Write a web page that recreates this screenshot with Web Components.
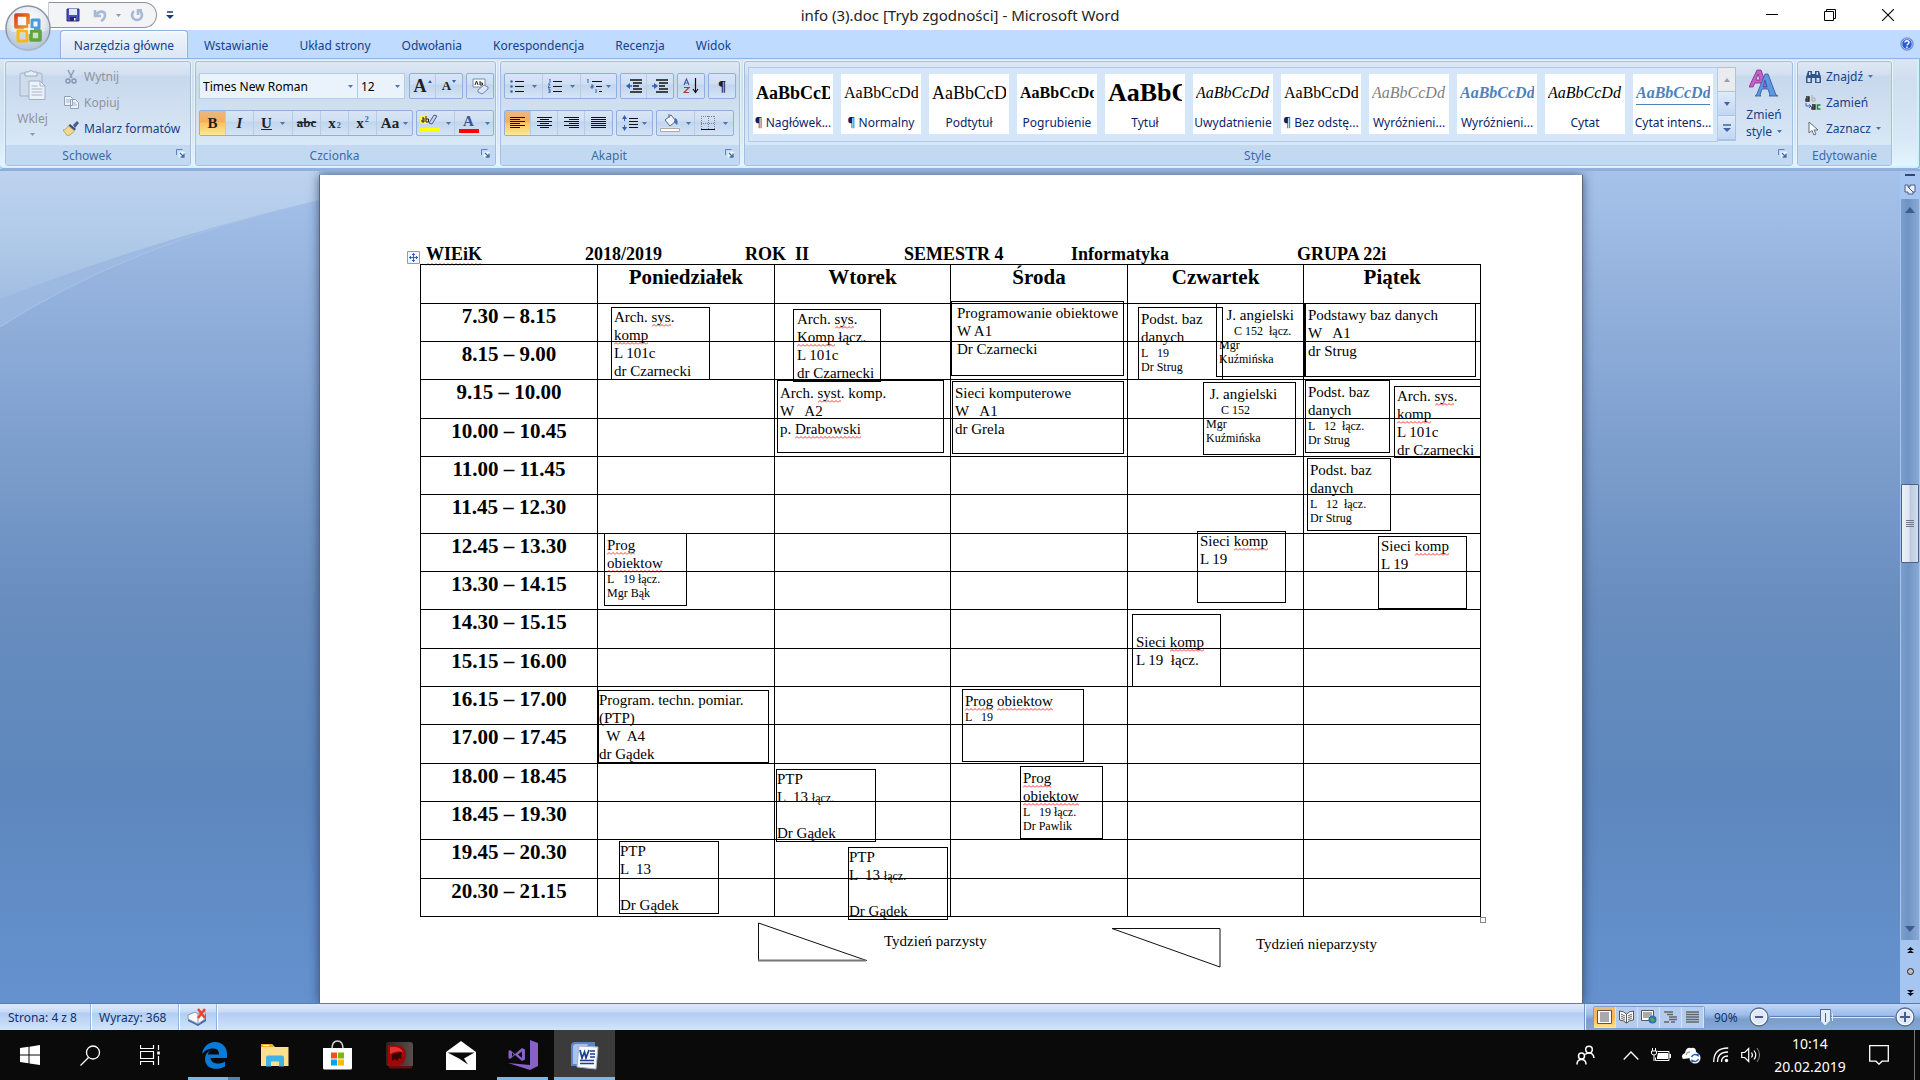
<!DOCTYPE html>
<html lang="pl">
<head>
<meta charset="utf-8">
<title>info (3).doc [Tryb zgodności] - Microsoft Word</title>
<style>
html,body{margin:0;height:100%}
body{font-family:"Noto Sans","Open Sans",sans-serif;font-size:12px;color:#15428b;overflow:hidden}
</style>
</head>
<body>
<word-app></word-app>
<script>
const ICONS = {
  office: [46,46,`<defs><radialGradient id="g" cx=".5" cy=".35" r=".65"><stop offset="0" stop-color="#fff"/><stop offset=".6" stop-color="#e6ebf2"/><stop offset="1" stop-color="#a9b9cf"/></radialGradient><linearGradient id="o1" x2="1" y2="1"><stop offset="0" stop-color="#d8401a"/><stop offset="1" stop-color="#f59a22"/></linearGradient></defs><circle cx="23" cy="23" r="22" fill="url(#g)" stroke="#8b95a5" stroke-width="1.5"/><path d="M2 25a21 21 0 0 0 42 0c-9 4-33 4-42 0z" fill="#bccbe0" opacity=".6"/><g fill="none" stroke-width="3.6" stroke-linejoin="round"><path d="M11 10h12v12h-12z" stroke="url(#o1)"/><path d="M27 15h7v8h-7z" stroke="#4a9be0" stroke-width="3"/><path d="M13 26h9v10h-9z" stroke="#f5b81c" stroke-width="3"/><path d="M26 26h9v9h-9z" stroke="#5da738"/></g><path d="M19 24h10M24 19v10" stroke="#fff" stroke-width="1.500"/>`],
  save: [14,14,`<path d="M1 1h12v12h-12z" fill="#4a4fc0" stroke="#2b2f86"/><path d="M3 1h8v6h-8z" fill="#dfe8fb"/><path d="M4 9h6v4h-6z" fill="#25295c"/><path d="M8 10h1.500v2.500h-1.500z" fill="#fff"/>`],
  undo: [14,13,`<path d="M2 1v6h6M3 6c3-5 9-4 9 0 0 3-2 5-4 6" fill="none" stroke="#a9b9d4" stroke-width="2.600"/>`],
  redo: [14,13,`<path d="M4 2a5 5 0 1 0 6 0M12 1h-4v5" fill="none" stroke="#a9b9d4" stroke-width="2.600"/>`],
  more: [8,9,`<path d="M1 1h6" stroke="#1f3a6e" stroke-width="1.500"/><path d="M0 4h8l-4 4z" fill="#1f3a6e"/>`],
  min: [12,12,`<path d="M0 5.500h12" stroke="#000"/>`],
  restore: [12,12,`<path d="M.5 2.500h9v9h-9zM2.500 2.500v-2h9v9h-2" fill="none" stroke="#000"/>`],
  close: [12,12,`<path d="M0 0l12 12M12 0l-12 12" stroke="#000" stroke-width="1.100"/>`],
  help: [14,14,`<circle cx="7" cy="7" r="6.300" fill="#2a5bd0" stroke="#8aa6d8"/><circle cx="7" cy="7" r="5.200" fill="none" stroke="#cfe0ff" stroke-width=".8"/><path d="M5 5.500c0-2.500 4-2.500 4 0 0 1.500-2 1.500-2 3M7 9.500v1.500" fill="none" stroke="#fff" stroke-width="1.500"/>`],
  arrow: [5,3,`<path d="M0 0h5l-2.500 3z" fill="#4d76ad"/>`],
  grow: [4,3,`<path d="M0 3h4l-2-3z" fill="#2f5fb5"/>`],
  shrink: [4,3,`<path d="M0 0h4l-2 3z" fill="#2f5fb5"/>`],
  arrowgray: [5,3,`<path d="M0 0h5l-2.500 3z" fill="#8f99a8"/>`],
  paste: [27,31,`<path d="M1 5q0-2 2-2h18q2 0 2 2v21h-22z" fill="#cfdcec" stroke="#a2b3c9"/><path d="M6 2h3q3-3 6 0h3v4h-12z" fill="#e8eef6" stroke="#9aabc2"/><path d="M10 11h11l5 5v13.500h-16z" fill="#eef3f9" stroke="#9fb0c6"/><path d="M21 11v5h5M12.500 16h6M12.500 19h11M12.500 22h11M12.500 25h11" fill="none" stroke="#a8b7cb"/>`],
  cut: [12,15,`<path d="M3 1l4 8M9 1l-4 8" stroke="#8fa1bb" stroke-width="1.600"/><circle cx="3" cy="12" r="2" fill="none" stroke="#8495b0" stroke-width="1.500"/><circle cx="9" cy="12" r="2" fill="none" stroke="#8495b0" stroke-width="1.500"/>`],
  copy: [15,13,`<path d="M.5.500h6l2 2v7h-8zM6.500 3.500h5l3 3v6h-8z" fill="#eef3fa" stroke="#8fa1bb"/><path d="M2 4h4M2 6h4M8 7h4M8 9h5" stroke="#a5b5ca"/>`],
  brush: [16,15,`<path d="M10 4l4-4 2 2-4 5z" fill="#4b5d8c"/><path d="M7 3l6 5-1.500 1.500-6-5z" fill="#3a4a74"/><path d="M5.500 5l6 5c-2 2-4 4-7 5l-4.500-6c2 0 4-2 5.500-4z" fill="#f3d890" stroke="#a88a45" stroke-width=".7"/>`],
  launch: [9,9,`<path d="M.5 6v-5.500h6" fill="none" stroke="#5d85b8"/><path d="M3 3h5.500v5.500h-5.500z" fill="#fff" stroke="#dfeefe"/><path d="M4 4l4 4M8 4.500v3.500h-3.500" stroke="#3d6aa3" stroke-width="1.300" fill="none"/>`],
  eraser: [17,17,`<path d="M1 1h12v8h-12z" fill="#fff" stroke="#7a8aa5"/><path d="M3 7l1.500-4 1.500 4M8 3v4M8 5h2.500v2h-2.500" stroke="#222" fill="none"/><path d="M6 12l6-5 4 2v2l-6 5-4-2z" fill="#dde6f5" stroke="#7487ad"/>`],
  bullets: [14,13,`<path d="M5 1.500h9M5 6.500h9M5 11.500h9" stroke="#111"/><g fill="#3a62b5"><circle cx="1.500" cy="1.500" r="1.300"/><circle cx="1.500" cy="6.500" r="1.300"/><circle cx="1.500" cy="11.500" r="1.300"/></g>`],
  numbers: [14,14,`<path d="M5 2.500h9M5 7.500h9M5 12.500h9" stroke="#111"/><path d="M1 0h1v4M0 5h2l-2 3.500h2.500M0 10h2v4h-2M.5 12h1.500" stroke="#3a62b5" fill="none"/>`],
  multi: [16,15,`<path d="M6 2.500h10M10 7.500h6M13 12.500h3" stroke="#111"/><path d="M1 0h1v4M5 6h2v3h-2v-1.500h2M10 10v4" stroke="#3a62b5" fill="none"/>`],
  outdent: [16,15,`<path d="M4 1h12M7 4h9M7 7h6M7 10h9M4 13h12" stroke="#111" stroke-width="1.400"/><path d="M0 7l4-3v6z" fill="#2f5fc0"/><path d="M3 7h3" stroke="#2f5fc0" stroke-width="1.500"/>`],
  indent: [16,15,`<path d="M4 1h12M7 4h9M7 7h6M7 10h9M4 13h12" stroke="#111" stroke-width="1.400"/><path d="M6 7l-4-3v6z" fill="#2f5fc0"/><path d="M0 7h3" stroke="#2f5fc0" stroke-width="1.500"/>`],
  sort: [16,16,`<path d="M1 7l2.500-6 2.500 6M2 5h3" stroke="#3c62a8" fill="none" stroke-width="1.200"/><path d="M1 9.500h5l-5 5h5" stroke="#a63a3a" fill="none" stroke-width="1.200"/><path d="M12.500 0v14M10 11l2.500 3.500 2.500-3.500" stroke="#111" fill="none" stroke-width="1.200"/>`],
  aleft: [15,12,`<path d="M0 .5h15M0 2.500h10M0 4.500h15M0 6.500h10M0 8.500h15M0 10.500h10" stroke="#111"/>`],
  acenter: [15,12,`<path d="M0 .5h15M3 2.500h9M0 4.500h15M3 6.500h9M0 8.500h15M3 10.500h9" stroke="#111"/>`],
  aright: [15,12,`<path d="M0 .5h15M5 2.500h10M0 4.500h15M5 6.500h10M0 8.500h15M5 10.500h10" stroke="#111"/>`],
  ajust: [15,12,`<path d="M0 .5h15M0 2.500h15M0 4.500h15M0 6.500h15M0 8.500h15M0 10.500h15" stroke="#111"/>`],
  spacing: [16,16,`<path d="M7 3.500h9M7 6.500h9M7 9.500h9M7 12.500h9" stroke="#111"/><path d="M0 4l2.500-4 2.500 4zM0 12l2.500 4 2.500-4z" fill="#2f5fc0"/><path d="M2.500 3v3M2.500 10v3" stroke="#2f5fc0"/>`],
  bucket: [20,18,`<path d="M5 6l6-5 5 6-6 5z" fill="#f1f5fb" stroke="#55678a"/><path d="M9 4v-4" stroke="#55678a"/><path d="M15 4c3 1 3 5 2 7l-3-3z" fill="#3d70ba"/><path d="M0 13h20v1.500h-20z" fill="#ff0"/><path d="M.5 14.500h19v3h-19z" fill="#fff" stroke="#aaa"/>`],
  border: [14,15,`<path d="M.5 0v13M7.500 0v13M13.500 0v13M0 .5h14M0 7.500h14" stroke="#7a8499" stroke-dasharray="1 1"/><path d="M0 13.500h14" stroke="#111"/>`],
  marker: [20,18,`<path d="M0 1h8v9h-8z" fill="#ffef5a"/><path d="M2 4h2v4h-2v-2h2M6 2v6h2.500v-3h-2.500" fill="none" stroke="#222"/><path d="M9 9l5-8 3 1-5 8z" fill="#c5d4ec" stroke="#4a5f8d"/><path d="M0 14h20v4h-20z" fill="#ff0"/>`],
  change: [30,28,`<path d="M0 18L8 1h4l6 17h-5l-1-4h-6l-2 4zM7 11h4l-2-6z" fill="#c55fc5" stroke="#7e2f8c" stroke-width=".8"/><path d="M6 27l1.500-1 8.500-21h3l8 21 2 1h-9l1-1-2-6h-6l-2 6 1 1zM14 18h4l-2-7z" fill="#5f97e0" stroke="#2c56a4" stroke-width=".8"/>`],
  find: [15,13,`<path d="M2 1h4v3h3v-3h4l2 6v6h-6v-5h-3v5h-6v-6z" fill="#32558c"/><path d="M1.500 8h3v4h-3zM10.500 8h3v4h-3zM3 2h1.500v3h-1.500zM10.500 2h1.500v3h-1.500z" fill="#cfe0f5"/>`],
  replace: [16,15,`<path d="M1 2h3v4h-3v-2h3" fill="none" stroke="#222" stroke-width="1.300"/><path d="M7 0v6h3v-3h-3" fill="none" stroke="#aaa"/><path d="M1 8v3h4M4 9.500l2 1.500-2 2" fill="none" stroke="#3b63a8"/><path d="M7 10h3v4h-3v-2h3" fill="none" stroke="#222" stroke-width="1.300"/><path d="M15.500 10h-3v4h3" fill="none" stroke="#1b8a2b" stroke-width="1.600"/>`],
  cursor: [10,15,`<path d="M1 1v11l3-2.500 2 4.500 2-1-2-4h4z" fill="#fff" stroke="#5b6a82"/>`],
  up: [6,4,`<path d="M0 4h6l-3-4z" fill="#9a9fa8"/>`],
  down: [6,4,`<path d="M0 0h6l-3 4z" fill="#3e66a4"/>`],
  expand: [8,8,`<path d="M0 1h8" stroke="#3e66a4" stroke-width="1.500"/><path d="M0 4h8l-4 4z" fill="#3e66a4"/>`],
  move: [13,13,`<path d="M.5.500h12v12h-12z" fill="#f3f5f9" stroke="#9a9a9a"/><path d="M6.500 2v9M2 6.500h9M5 3.500h3M5 9.500h3M3.500 5v3M9.500 5v3" stroke="#2f5fc0"/>`],
  tri1: [110,40,`<path d="M.5 1v37.500h108z" fill="none" stroke="#111"/><path d="M0 38.500h108" stroke="#777" stroke-width="2"/>`],
  tri2: [110,40,`<path d="M1 .5h108v38.500z" fill="none" stroke="#111"/>`],
  swoosh: [319,160,`<defs><linearGradient id="s" x2="0" y2="1"><stop offset="0" stop-color="#bdd3f0"/><stop offset=".5" stop-color="#b1cbe9"/><stop offset="1" stop-color="#a3bde2"/></linearGradient></defs><path d="M0 0h319v29Q130 72 0 156z" fill="#9fbbe2" opacity=".75"/><path d="M319 29Q130 72 0 156" fill="none" stroke="#a9c3e8"/><path d="M0 0h319v29Q160 66 0 128z" fill="url(#s)"/>`],
  ruler: [12,12,`<path d="M1 2h3v2h2v-2h5v7h-2v2h-5v-2h-3z" fill="#e8eefb" stroke="#4c5d80"/><path d="M4 4l5 5" stroke="#4c5d80"/>`],
  sup: [10,6,`<path d="M0 6h10l-5-6z" fill="#3f5c8f"/>`],
  sdown: [10,6,`<path d="M0 0h10l-5 6z" fill="#3f5c8f"/>`],
  pgup: [7,7,`<path d="M0 3h7l-3.500-3zM0 6h7l-3.500-3z" fill="#111"/>`],
  pgdn: [7,7,`<path d="M0 1h7l-3.500 3zM0 4h7l-3.500 3z" fill="#111"/>`],
  ball: [7,7,`<circle cx="3.500" cy="3.500" r="3" fill="#c4bfb8" stroke="#222"/>`],
  spell: [21,19,`<path d="M1 9l7-3 4 2 7-2v7l-8 5-10-5z" fill="#3f66b2"/><path d="M1 7l7-3 3 2 7-3v8l-7 5-10-5z" fill="#f7f9fd" stroke="#8a97b0"/><path d="M11 6v9" stroke="#8a97b0"/><path d="M11 1l7 9M18 1l-7 9" stroke="#e8442c" stroke-width="2.500"/>`],
  v1: [15,14,`<path d="M.5.500h14v13h-14z" fill="#fff" stroke="#555"/><path d="M3 3h9M3 5h9M3 7h9M3 9h9M3 11h9" stroke="#555"/>`],
  v2: [15,14,`<path d="M.5 1q4 0 7 3 3-3 7-3v9q-4 0-7 3-3-3-7-3zM7.500 4v9" fill="#fff" stroke="#555"/><path d="M2 4l4 2M2 6l4 2M2 8l4 2M13 4l-4 2M13 6l-4 2M13 8l-4 2" stroke="#666"/>`],
  v3: [16,14,`<path d="M.5.500h12v10h-12z" fill="#fff" stroke="#555"/><path d="M2 3h9M2 5h9M2 7h6" stroke="#555"/><circle cx="11.500" cy="9.500" r="4" fill="#2d6db5"/><path d="M9 9q2-3 4 0t-2 3z" fill="#5aa84a"/>`],
  v4: [13,13,`<path d="M0 1h9M3 3.500h6M5 6h8M5 8.500h8M0 11h5M7 11h4" stroke="#666" stroke-width="1.300"/>`],
  v5: [13,12,`<path d="M0 1h13M0 3.500h13M0 6h13M0 8.500h13M0 11h13" stroke="#666" stroke-width="1.500"/>`],
  zminus: [20,20,`<circle cx="10" cy="10" r="9" fill="#dfe8f4" stroke="#526c99" stroke-width="1.300"/><circle cx="10" cy="10" r="7.600" fill="none" stroke="#fff"/><path d="M6 10h8" stroke="#475f8a" stroke-width="2"/>`],
  zplus: [20,20,`<circle cx="10" cy="10" r="9" fill="#dfe8f4" stroke="#526c99" stroke-width="1.300"/><circle cx="10" cy="10" r="7.600" fill="none" stroke="#fff"/><path d="M5 10h10M10 5v10" stroke="#475f8a" stroke-width="2"/>`],
  win: [20,20,`<path d="M0 3l8.500-1.200v7.700h-8.500zM9.500 1.700l10.500-1.700v9.500h-10.500zM0 10.500h8.500v7.700l-8.500-1.200zM9.500 10.500h10.500v9.500l-10.500-1.500z" fill="#fff"/>`],
  search: [21,21,`<circle cx="13" cy="7.500" r="6.500" fill="none" stroke="#fff" stroke-width="1.300"/><path d="M8.500 12.500l-8 8" stroke="#fff" stroke-width="1.300"/>`],
  tasks: [20,20,`<path d="M.5 0v3.500h13v-3.500M.5 20v-3.500h13v3.500M.5 6.500h13v7h-13zM18.500 0v5M18.500 11v9" fill="none" stroke="#fff" stroke-width="1.200"/><path d="M17.200 6.500h2.600v3h-2.600z" fill="#fff"/>`],
  edge: [26,27,`<path d="M1 12C2 5 7 0 14 0c8 0 12 6 12 12v4h-16.500c.5 6 9 7 14.500 3.500v5C16 29 4 27 4 17c0-4 2-7 5-8.500-1 1-2 2.500-2 4h11c0-4-2-6-6-6-5 0-9 2.500-11 5.500z" fill="#0a7ad8"/>`],
  folder: [28,24,`<path d="M0 1h11l3 3h13.500v19h-27.500z" fill="#fde08d"/><path d="M0 1h11l2 3h-13z" fill="#e8b12c"/><path d="M2 2h6v1h-6z" fill="#fff"/><path d="M5 23.500v-9q0-2 2-2h14q2 0 2 2v9h-5v-5h-8v5z" fill="#3fb2e8"/>`],
  store: [29,30,`<path d="M9 9q0-8 5.500-8t5.500 8" fill="none" stroke="#cfcfcf" stroke-width="1.600"/><path d="M0 8h29v20q0 1.500-1.500 1.500h-26q-1.500 0-1.500-1.500z" fill="#fff"/><path d="M8 12.500h6v6h-6z" fill="#f25022"/><path d="M15 12.500h6v6h-6z" fill="#7fba00"/><path d="M8 19.500h6v6h-6z" fill="#00a4ef"/><path d="M15 19.500h6v6h-6z" fill="#ffb900"/>`],
  dred: [27,27,`<defs><linearGradient id="dk" x1="0" x2="1"><stop offset="0" stop-color="#2b2422"/><stop offset="1" stop-color="#55504e"/></linearGradient></defs><path d="M0 2q0-2 2-2h22q3 0 3 3v21h-25q-2 0-2-2z" fill="url(#dk)"/><path d="M2 3h8q10 0 10 10t-10 11h-8z" fill="#a00808"/><path d="M4 5h6q6 1 7 6-4-4-13 1z" fill="#e23434"/><path d="M6 12l10-2-1 4 1 3-3-1-2 3-2-2-3 2z" fill="#3c0303"/><path d="M2 24h24v2.500h-22z" fill="#6a0c0c"/>`],
  mail: [30,29,`<path d="M0 11l15-11 15 11v18h-30z" fill="#fff"/><path d="M1.500 11.500h27l-10.500 6 4 6-9-6z" fill="#0a0a0a"/>`],
  vs: [30,30,`<path d="M22 0l8 3v23l-8 4-22-7 22 2z" fill="#8861c5"/><path d="M2 10l5 4 7-6 3 1.500v10l-3 1.500-7-6-5 4-1.500-1v-7zM4 12.500v4l2-2zM14 11.500l-4 3 4 3.500z" fill="#8861c5" fill-rule="evenodd"/>`],
  word: [29,29,`<path d="M1 5q0-4 4-4h20v24h-24z" fill="#5f86c4"/><path d="M3 6q0-3 3-3h12l-8 20h-7z" fill="#a9c3ea"/><path d="M9 5l19 1-2 22-19-2z" fill="#f6f9ff" stroke="#9db4d8"/><path d="M10 9l2 8 2.500-6 1.500 6 3-8" fill="none" stroke="#1d3f8c" stroke-width="1.700"/><path d="M20 10h5M20 13h5M20 16h5M10 19.500h14M10 22.500h14" stroke="#1d3f8c" stroke-width="1.400"/>`],
  people: [20,20,`<g fill="none" stroke="#fff" stroke-width="1.500"><circle cx="13" cy="4.500" r="3.300"/><circle cx="5.500" cy="11" r="3"/><path d="M1 19.500q0-5 4.500-5t4.500 5M9 9.500q2-1.500 4-1.500 4.500 0 5 5"/></g>`],
  chev: [16,9,`<path d="M.7 8.500l7.300-7.500 7.300 7.500" fill="none" stroke="#fff" stroke-width="1.300"/>`],
  battery: [20,14,`<path d="M6.500 3.500h11.500v9h-13.500v-3" fill="none" stroke="#fff"/><path d="M7 5h10v6h-11v-2z" fill="#fff"/><path d="M18.500 6h1.500v4h-1.500z" fill="#fff"/><path d="M1.500 0v3M4.500 0v3M.5 3h5v2q0 2-2.500 2t-2.500-2zM3 7v6" fill="none" stroke="#fff"/>`],
  cloud: [20,17,`<path d="M2 12q-3-4 2-6 1-6 6-5 5-1 5 4 3 1 3 5z" fill="#fff"/><path d="M5 8q1-4 4-3" fill="none" stroke="#777"/><circle cx="14" cy="11" r="5.500" fill="#fff"/><path d="M10.500 10q2-4 6.500-1.500v-2M17.500 12q-2 4-6.500 1.500v2" fill="none" stroke="#1c5fc0" stroke-width="1.500"/>`],
  wifi: [16,16,`<g fill="none" stroke="#fff" stroke-width="1.300"><path d="M.7 15q0-14 14.500-14"/><path d="M4.500 15q0-10 10.500-10"/><path d="M8.500 15q0-6 6.500-6"/></g><circle cx="13.500" cy="13.500" r="1.700" fill="#fff"/>`],
  vol: [20,16,`<path d="M.7 5.500h3l4-4v13l-4-4h-3z" fill="none" stroke="#fff" stroke-width="1.200"/><path d="M10.500 5.500q1.800 2.500 0 5M13 3.500q3.500 4.500 0 9" fill="none" stroke="#fff" stroke-width="1.200"/><path d="M16 1q5 7 0 14" fill="none" stroke="#888"/>`],
  notif: [20,20,`<path d="M.7.700h18.600v15.500h-6.300l-3 3-3-3h-6.300z" fill="none" stroke="#fff" stroke-width="1.300"/>`]
};

const define = (tag, css, html, after) => {
  const tpl = document.createElement('template');
  tpl.innerHTML = `<style>*{box-sizing:border-box}button{font:inherit;color:inherit;background:none;border:0;padding:0;margin:0}${css}</style>${html}`;
  customElements.define(tag, class extends HTMLElement {
    constructor() { super(); this.attachShadow({ mode: 'open' }).append(tpl.content.cloneNode(true)); }
    connectedCallback() { if (after) after(this, this.shadowRoot); }
  });
};

define('ui-icon', `:host{display:inline-flex;flex:none}svg{display:block}`, ``, (el, root) => {
  const [w, h, body] = ICONS[el.getAttribute('name')];
  const box = document.createElement('div');
  box.innerHTML = `<svg width="${w}" height="${h}" viewBox="0 0 ${w} ${h}" aria-hidden="true">${body}</svg>`;
  root.append(box.firstChild);
});

define('title-bar', `
:host{display:grid;grid-template-columns:1fr auto 1fr;align-items:center;height:30px;background:#fff;color:#222;position:relative}
.qat{align-self:start;display:flex;align-items:center;margin:2px 0 0 48px}
.pill{display:flex;align-items:center;height:26px;width:109px;padding:0 12px 0 17px;gap:9px;background:#f3f4f6;border:1px solid #8d929b;border-radius:0 13px 13px 0;border-left-color:#c9ccd2}
.pill button{display:flex}.pill .u{margin-left:4px}
.more{display:flex;margin-left:9px}
h1{font-size:15px;line-height:30px;font-weight:400;margin:0}
.win{display:flex;justify-content:flex-end;gap:46px;padding-right:26px;align-items:center}
.win button{display:flex}
.office{position:absolute;left:5px;top:5px;z-index:2}`,
`<div class="qat"><div class="pill"><button aria-label="Zapisz"><ui-icon name="save"></ui-icon></button><button class="u" aria-label="Cofnij"><ui-icon name="undo"></ui-icon></button><ui-icon name="arrowgray"></ui-icon><button aria-label="Powtórz"><ui-icon name="redo"></ui-icon></button></div><button class="more" aria-label="Dostosuj"><ui-icon name="more"></ui-icon></button></div>
<h1>info (3).doc [Tryb zgodności] - Microsoft Word</h1>
<div class="win"><button aria-label="Minimalizuj"><ui-icon name="min"></ui-icon></button><button aria-label="Przywróć"><ui-icon name="restore"></ui-icon></button><button aria-label="Zamknij"><ui-icon name="close"></ui-icon></button></div>
<button class="office" aria-label="Przycisk pakietu Office"><ui-icon name="office"></ui-icon></button>`);

define('ribbon-tabs', `
:host{display:flex;align-items:flex-end;gap:1px;height:29px;background:#bfdbff;padding:0 6px 0 60px;border-bottom:1px solid #8db2e3}
button{height:28px;padding:2px 15px 0;color:#15428b}
.on{height:28px;width:128px;padding:2px 0 0;background:linear-gradient(#eef5fd,#dbe6f4);border:1px solid #8db2e3;border-bottom:0;border-radius:4px 4px 0 0;box-shadow:inset 0 1px 2px #fff}
.help{margin-left:auto;padding:0;display:flex;align-items:center}`,
`<button class="on">Narzędzia główne</button><button>Wstawianie</button><button>Układ strony</button><button>Odwołania</button><button>Korespondencja</button><button>Recenzja</button><button>Widok</button><button class="help" aria-label="Pomoc"><ui-icon name="help"></ui-icon></button>`);

define('ribbon-group', `
:host{display:flex;flex-direction:column;border:1px solid #a3bfdf;border-radius:3px;box-shadow:0 0 0 1px #e9f3fd;background:linear-gradient(#dee8f5 0,#d3dff0 13px,#c8d8ed 14px,#d9e8f6 84px);height:105px;overflow:hidden}
.body{flex:1;min-height:0}
footer{position:relative;height:20px;line-height:22px;background:#c2d9f1;color:#3e6aaa;display:flex;justify-content:center}
:host([launch]) footer{padding-right:22px}
footer button{position:absolute;right:5px;top:4px;display:flex}`,
`<div class="body"><slot></slot></div><footer><span></span></footer>`, (el, root) => {
  root.querySelector('span').textContent = el.getAttribute('label');
  if (el.hasAttribute('launch') && !root.querySelector('button'))
    root.querySelector('footer').insertAdjacentHTML('beforeend', '<button aria-label="Więcej opcji"><ui-icon name="launch"></ui-icon></button>');
});

define('style-item', `
:host{display:flex;flex-direction:column;width:80px;height:60px;background:#fff;overflow:hidden;flex:none}
.s{height:38px;margin:0 3px;overflow:hidden;display:flex;align-items:center;white-space:nowrap;color:#000;font:16px/38px "Liberation Serif",serif}
.n{color:#0b1f6b;text-align:center;line-height:22px;white-space:nowrap}`,
`<div class="s"><slot></slot></div><div class="n"></div>`, (el, root) => {
  root.querySelector('.n').textContent = el.getAttribute('label');
  root.querySelector('.s').style.cssText = el.dataset.font || '';
});

define('word-ribbon', `
:host{display:flex;gap:4px;height:110px;padding:2px 27px 5px 5px;background:linear-gradient(#dbe6f4,#cfdef0 20px,#d9e8f6 80px,#e3f6ff);border:1px solid #8db2e3;border-top:0;border-width:0 1px 1px 0;border-radius:0 0 4px 4px;box-shadow:inset 0 -2px 1px #cdf3ff,inset -2px 0 1px #cdf3ff}
.row{display:flex}
.clip{width:186px}.font{width:301px}.para{width:240px}.sty{flex:1;min-width:0}.edit{width:95px}
.cliprow{display:flex;height:84px}
.paste{width:53px;display:flex;flex-direction:column;align-items:center;padding-top:8px;color:#8e949d}
.paste span{line-height:20px;margin:8px 0 0}.paste ui-icon+span+ui-icon{margin-top:4px}
.list{display:flex;flex-direction:column;padding-top:1px}
.cliprow .list{margin-left:4px}.edit .list{padding-left:7px}
.list button{display:flex;align-items:center;height:26px;gap:5px;white-space:nowrap;color:#15428b}
.list .dis{color:#8e949d}
.list .ic{width:16px;display:flex;justify-content:center}
.tools{display:flex;flex-direction:column;gap:11px;padding:11px 3px 0;height:84px}
.tools .row{gap:3px}
.set{display:flex;height:26px;border:1px solid #8fb0dc;border-radius:2px;background:linear-gradient(#d8e5f5 0,#cfdff2 10px,#c1d5ed 11px,#d4e4f5)}
.set button{flex:none;display:flex;align-items:center;justify-content:center;gap:8px;border-right:1px solid #b5cbe8;color:#222;font-family:"Liberation Serif",serif;font-weight:700;font-size:15px}
.set .big{font-size:18px}.set .small{font-size:13px}
.set button:last-child{border:0}
.w26{width:26px}.w27{width:27px}.w28{width:28px}.w35{width:35px}.w38{width:38px}.w39{width:39px}
.set .g4{gap:4px}.set .g6{gap:6px}
.set .on{background:linear-gradient(#e8b884,#f8ad57 45%,#fcc25f 50%,#fde79b)}
.combo{display:flex;height:26px}
select{appearance:none;height:26px;border:1px solid #b3cbe9;background:#eaf2fb url("data:image/svg+xml,%3Csvg xmlns='http://www.w3.org/2000/svg' width='5' height='3'%3E%3Cpath d='M0 0h5l-2.5 3z' fill='%234d76ad'/%3E%3C/svg%3E") no-repeat right 4px center;font:inherit;color:#000;padding:0 3px;margin:0;border-radius:0}
.fn{width:159px}.fs{width:48px;margin-left:-1px;margin-right:1px}
sub,sup{font-size:8px;color:#2f5fb5;line-height:8px}sub{align-self:flex-end;margin-bottom:5px}sup{align-self:flex-start;margin-top:5px}.set .tight{gap:1px}
.tight ui-icon{align-self:flex-start;margin-top:6px}
.ac{display:flex;flex-direction:column;align-items:center;line-height:15px;color:#35578f}.ac i{width:20px;height:4px;background:red}
.gal{display:flex;height:84px;padding:5px 1px 4px 3px}
.strip{flex:1;min-width:0;display:flex;gap:8px;height:75px;padding:6px 4px 0;background:#d5e6f8;border:1px solid #b2cbea;overflow:hidden}
.scroll{width:18px;height:74px;display:flex;flex-direction:column;border:1px solid #a9c3e6;border-left:0}
.scroll button{flex:1;display:flex;align-items:center;justify-content:center;background:linear-gradient(#dfeafa,#c3d7f2);border-bottom:1px solid #a9c3e6}
.scroll button:first-child{background:#e9ebef}
.chg{width:54px;display:flex;flex-direction:column;align-items:center;color:#15428b;padding-top:2px;line-height:17px;margin-left:1px}
.chg span{display:flex;align-items:center;gap:5px}.chg .a{margin-top:9px}`,
`<ribbon-group class="clip" label="Schowek" launch><div class="cliprow">
<button class="paste"><ui-icon name="paste"></ui-icon><span>Wklej</span><ui-icon name="arrowgray"></ui-icon></button>
<div class="list"><button class="dis"><span class="ic"><ui-icon name="cut"></ui-icon></span>Wytnij</button><button class="dis"><span class="ic"><ui-icon name="copy"></ui-icon></span>Kopiuj</button><button><span class="ic"><ui-icon name="brush"></ui-icon></span>Malarz formatów</button></div></div></ribbon-group>
<ribbon-group class="font" label="Czcionka" launch><div class="tools">
<div class="row"><div class="combo"><select class="fn" aria-label="Czcionka"><option>Times New Roman</option></select><select class="fs" aria-label="Rozmiar czcionki"><option>12</option></select></div>
<div class="set"><button class="w26 tight big">A<ui-icon name="grow"></ui-icon></button><button class="w26 tight small">A<ui-icon name="shrink"></ui-icon></button></div><div class="set"><button class="w26" aria-label="Wyczyść formatowanie"><ui-icon name="eraser"></ui-icon></button></div></div>
<div class="row"><div class="set"><button class="w26 on">B</button><button class="w28"><i>I</i></button><button class="w39"><u>U</u><ui-icon name="arrow"></ui-icon></button><button class="w28 small"><s>abc</s></button><button class="w28 tight">x<sub>2</sub></button><button class="w28 tight">x<sup>2</sup></button><button class="w35 g4">Aa<ui-icon name="arrow"></ui-icon></button></div>
<div class="set"><button class="w38 g6" aria-label="Wyróżnienie"><ui-icon name="marker"></ui-icon><ui-icon name="arrow"></ui-icon></button><button class="w38 g6"><span class="ac">A<i></i></span><ui-icon name="arrow"></ui-icon></button></div></div></div></ribbon-group>
<ribbon-group class="para" label="Akapit" launch><div class="tools">
<div class="row"><div class="set"><button class="w38" aria-label="Punktory"><ui-icon name="bullets"></ui-icon><ui-icon name="arrow"></ui-icon></button><button class="w38" aria-label="Numerowanie"><ui-icon name="numbers"></ui-icon><ui-icon name="arrow"></ui-icon></button><button class="w35 g4" aria-label="Lista wielopoziomowa"><ui-icon name="multi"></ui-icon><ui-icon name="arrow"></ui-icon></button></div>
<div class="set"><button class="w26" aria-label="Zmniejsz wcięcie"><ui-icon name="outdent"></ui-icon></button><button class="w26" aria-label="Zwiększ wcięcie"><ui-icon name="indent"></ui-icon></button></div><div class="set"><button class="w26" aria-label="Sortuj"><ui-icon name="sort"></ui-icon></button></div><div class="set"><button class="w26">¶</button></div></div>
<div class="row"><div class="set"><button class="w26 on" aria-label="Do lewej"><ui-icon name="aleft"></ui-icon></button><button class="w27" aria-label="Do środka"><ui-icon name="acenter"></ui-icon></button><button class="w27" aria-label="Do prawej"><ui-icon name="aright"></ui-icon></button><button class="w27" aria-label="Wyjustuj"><ui-icon name="ajust"></ui-icon></button></div>
<div class="set"><button class="w35 g4" aria-label="Interlinia"><ui-icon name="spacing"></ui-icon><ui-icon name="arrow"></ui-icon></button></div><div class="set"><button class="w38 g6" aria-label="Cieniowanie"><ui-icon name="bucket"></ui-icon><ui-icon name="arrow"></ui-icon></button><button class="w38" aria-label="Obramowanie"><ui-icon name="border"></ui-icon><ui-icon name="arrow"></ui-icon></button></div></div></div></ribbon-group>
<ribbon-group class="sty" label="Style" launch><div class="gal"><div class="strip">
<style-item label="¶ Nagłówek..." data-font="font-weight:700;font-size:18px">AaBbCcDd</style-item>
<style-item label="¶ Normalny">AaBbCcDd</style-item>
<style-item label="Podtytuł" data-font="font-size:18px">AaBbCcDd</style-item>
<style-item label="Pogrubienie" data-font="font-weight:700">AaBbCcDd</style-item>
<style-item label="Tytuł" data-font="font-weight:700;font-size:26px">AaBbCc</style-item>
<style-item label="Uwydatnienie" data-font="font-style:italic">AaBbCcDd</style-item>
<style-item label="¶ Bez odstę...">AaBbCcDd</style-item>
<style-item label="Wyróżnieni..." data-font="font-style:italic;color:#808080">AaBbCcDd</style-item>
<style-item label="Wyróżnieni..." data-font="font-style:italic;font-weight:700;color:#4f81bd">AaBbCcDd</style-item>
<style-item label="Cytat" data-font="font-style:italic">AaBbCcDd</style-item>
<style-item label="Cytat intens..." data-font="font-style:italic;font-weight:700;color:#4f81bd;background:linear-gradient(#4f81bd,#4f81bd) no-repeat 0 30px/100% 1px">AaBbCcDd</style-item>
</div><div class="scroll"><button aria-label="W górę"><ui-icon name="up"></ui-icon></button><button aria-label="W dół"><ui-icon name="down"></ui-icon></button><button aria-label="Więcej"><ui-icon name="expand"></ui-icon></button></div>
<button class="chg"><ui-icon name="change"></ui-icon><span class="a">Zmień</span><span>style <ui-icon name="arrow"></ui-icon></span></button></div></ribbon-group>
<ribbon-group class="edit" label="Edytowanie"><div class="list"><button><span class="ic"><ui-icon name="find"></ui-icon></span>Znajdź <ui-icon name="arrow"></ui-icon></button><button><span class="ic"><ui-icon name="replace"></ui-icon></span>Zamień</button><button><span class="ic"><ui-icon name="cursor"></ui-icon></span>Zaznacz <ui-icon name="arrow"></ui-icon></button></div></ribbon-group>`);

define('text-note', `
:host{position:absolute;display:block;border:1px solid #000;white-space:pre;overflow:visible}
:host([open]){border-bottom:0}`, `<slot></slot>`, el => {
  const [x, y, w, h, l, t] = el.getAttribute('box').split(' ');
  el.style.cssText = `left:${x}px;top:${y}px;width:${w}px;height:${h}px;padding:${t}px 0 0 ${l}px`;
});

/* box: left, top, width, height, left padding, top padding. Lines: "~" opens a small line, [..] marks a spelling squiggle */
const NOTES = [
 ['191 43 99 73 2 0',['Arch. [sys].','[komp]','L 101c','dr Czarnecki'],'open'],
 ['373 45 88 73 3 0',['Arch. [sys].','[Komp] łącz.','L 101c','dr Czarnecki']],
 ['357 116 167 73 2 3',['Arch. [syst]. komp.','W   A2','p. [Drabowski]']],
 ['531 37 173 75 5 2',['Programowanie obiektowe','W A1','Dr Czarnecki']],
 ['532 117 172 73 2 2',['Sieci komputerowe','W   A1','dr Grela']],
 ['718 43 85 73 2 2',['Podst. baz','danych','~L   19','~Dr Strug'],'open'],
 ['796 39 89 74 2 2',['  J. angielski','~     C 152  łącz.','~Mgr','~Kuźmińska']],
 ['885 39 171 74 2 2',['Podstawy baz danych','W   A1','dr Strug']],
 ['783 118 93 73 2 2',[' J. angielski','~     C 152','~Mgr','~Kuźmińska']],
 ['885 116 85 73 2 2',['Podst. baz','danych','~L   12  łącz.','~Dr Strug']],
 ['974 122 87 72 2 0',['Arch. [sys].','[komp]','L 101c','dr Czarnecki']],
 ['887 194 84 73 2 2',['Podst. baz','danych','~L   12  łącz.','~Dr Strug']],
 ['184 269 83 73 2 2',['[Prog]','[obiektow]','~L   19 łącz.','~Mgr Bąk']],
 ['777 267 89 72 2 0',['Sieci [komp]','L 19']],
 ['958 272 89 73 2 0',['Sieci [komp]','L 19']],
 ['712 350 89 73 3 0',[' ','Sieci [komp]','L 19  łącz.'],'open'],
 ['542 425 122 73 2 2',['[Prog] [obiektow]','~L   19']],
 ['600 502 83 73 2 2',['[Prog]','[obiektow]','~L   19 łącz.','~Dr Pawlik']],
 ['178 426 171 73 0 0',['Program. techn. pomiar.','(PTP)','  W  A4','dr Gądek']],
 ['356 505 100 73 0 0',['PTP','L  13 {łącz.}',' ','Dr Gądek']],
 ['199 577 100 73 0 0',['PTP','L  13',' ','Dr Gądek']],
 ['428 583 100 73 0 0',['PTP','L  13 {łącz.}',' ','Dr Gądek']]
];
const HOURS = ['7.30 – 8.15','8.15 – 9.00','9.15 – 10.00','10.00 – 10.45','11.00 – 11.45','11.45 – 12.30','12.45 – 13.30','13.30 – 14.15','14.30 – 15.15','15.15 – 16.00','16.15 – 17.00','17.00 – 17.45','18.00 – 18.45','18.45 – 19.30','19.45 – 20.30','20.30 – 21.15'];
const DAYS = ['Poniedziałek','Wtorek','Środa','Czwartek','Piątek'];
const line = s => `<p${s[0] === '~' ? ' class="s"' : ''}>${s.replace('~','').replace(/\[(.+?)\]/g,'<u>$1</u>').replace(/\{(.+?)\}/g,'<small>$1</small>')}</p>`;

define('schedule-sheet', `
:host{display:block;width:1264px;max-width:100%;margin:0 auto;background:#fff;border:1px solid #5c6675;border-width:0 1px;box-shadow:0 0 10px rgba(30,50,90,.7);padding:70px 0 0 100px;color:#000;font-family:"Liberation Serif",serif;overflow:hidden}
.head{display:grid;grid-template-columns:159px 160px 159px 167px 226px auto;font-weight:700;font-size:18px;line-height:19px;padding-left:6px;white-space:pre}
.board{position:relative;width:1061px}
table{border-collapse:collapse;table-layout:fixed;width:1061px}
tr{height:38px}tr:nth-child(3n+1){height:39px}
th,td{border:1px solid #000;padding:0;vertical-align:top;font-weight:700;font-size:21px;line-height:24px;text-align:center}
th:first-child{width:177px}
p{margin:0;font-size:15px;line-height:18px}.s{font-size:12px;line-height:14px}small{font-size:12px;line-height:12px}
u{text-decoration:none;padding-bottom:2px;background:url("data:image/svg+xml,%3Csvg xmlns='http://www.w3.org/2000/svg' width='4' height='3'%3E%3Cpath d='M0 2.5l2-2 2 2' fill='none' stroke='%23f00' stroke-width='.8'/%3E%3C/svg%3E") repeat-x left bottom}
.move{position:absolute;left:-13px;top:-13px}
.end{position:absolute;right:-5px;bottom:-6px;width:6px;height:6px;border:1px solid #888}
.legend{display:flex;align-items:flex-start;padding:5px 0 0 338px;height:100px;font-size:15px;line-height:17px}
.legend span{margin-top:11px}.t1{margin-left:16px;width:227px}.t2{margin-left:35px}
.legend ui-icon+.t2{margin-top:14px}.tri2{margin-top:6px}`,
`<div class="head"><span><u>WIEiK</u></span><span>2018/2019</span><span>ROK  II</span><span>SEMESTR 4</span><span>Informatyka</span><span>GRUPA 22i</span></div>
<div class="board"><table><tbody><tr><th></th>${DAYS.map(d=>`<th scope="col">${d}</th>`).join('')}</tr>${HOURS.map(h=>`<tr><th scope="row">${h}</th>${'<td></td>'.repeat(5)}</tr>`).join('')}</tbody></table>
${NOTES.map(([b,l,f])=>`<text-note box="${b}" ${f||''}>${l.map(line).join('')}</text-note>`).join('')}
<ui-icon class="move" name="move"></ui-icon><div class="end"></div></div>
<div class="legend"><ui-icon name="tri1"></ui-icon><span class="t1">Tydzień parzysty</span><ui-icon class="tri2" name="tri2"></ui-icon><span class="t2">Tydzień nieparzysty</span></div>`);

define('scroll-rail', `
:host{display:flex;flex-direction:column;align-items:center;width:20px;background:#a7c5f1;padding-top:3px}
.split{width:10px;height:2px;background:#33476e;margin-bottom:7px}
.track{flex:1;width:18px;margin-top:4px;display:flex;flex-direction:column;align-items:center;background:linear-gradient(90deg,#7c9ecb,#6f94c4 40%,#8aaad4);padding:8px 0 8px}
.thumb{width:18px;height:79px;border:1px solid #4c5f90;border-radius:1px;background:linear-gradient(90deg,#eef1f6,#dfe6ef 45%,#b9c9de 50%,#d5dfec);display:flex;align-items:center;justify-content:center}
.thumb i{width:8px;height:8px;background:repeating-linear-gradient(#6f7785 0 1px,transparent 1px 2px)}
.a{flex:271}.b{flex:362}
.nav{height:63px;display:flex;flex-direction:column;justify-content:space-around;align-items:center}
button{display:flex}`,
`<div class="split"></div><button aria-label="Linijka"><ui-icon name="ruler"></ui-icon></button><div class="track"><button aria-label="W górę"><ui-icon name="sup"></ui-icon></button><div class="a"></div><div class="thumb"><i></i></div><div class="b"></div><button aria-label="W dół"><ui-icon name="sdown"></ui-icon></button></div><div class="nav"><button aria-label="Poprzednia strona"><ui-icon name="pgup"></ui-icon></button><button aria-label="Wybierz obiekt"><ui-icon name="ball"></ui-icon></button><button aria-label="Następna strona"><ui-icon name="pgdn"></ui-icon></button></div>`);

define('word-workspace', `
:host{display:flex;position:relative;flex:1;min-height:0;background:linear-gradient(#a5c3ea 0,#94b2dd 14%,#7d9fce 33%,#688dbe 52%,#5d87bd 75%,#6592cf);border-top:2px solid #92aed4;overflow:hidden}
.back{position:absolute;left:0;top:0}
main{flex:1;min-width:0;display:flex;padding:4px 0 0 2px;position:relative;overflow:hidden}`,
`<ui-icon class="back" name="swoosh"></ui-icon><main><schedule-sheet></schedule-sheet></main><scroll-rail></scroll-rail>`);

define('status-bar', `
:host{display:flex;align-items:stretch;height:27px;border-top:1px solid #567db0;background:linear-gradient(#dce9fb 0,#c9dcf7 8px,#b0cdf3 9px,#d3e4f9);color:#15316b}
.c{display:flex;align-items:center;min-width:38px;padding:0 8px;border-right:1px solid #92b2de;box-shadow:1px 0 #fff}
.page{min-width:91px}.words{min-width:88px}
.right{margin-left:auto;width:336px;display:flex;align-items:center;padding:0 5px 0 8px;background:linear-gradient(#c1d7f8,#9dbdea 40%,#7a9dcb 60%,#86a8d8);border-left:1px solid #6f93c8;box-shadow:inset 1px 0 #e8f1fd}
.views{display:flex;height:23px;border:1px solid #7d9fd0;background:#b4cdef;border-radius:2px}
.views button{width:22px;display:flex;align-items:center;justify-content:center;border-right:1px solid #d5e3f7}
.views .on{background:linear-gradient(#ecbc7d,#f9b64c 50%,#fde58d)}
.z{margin:0 8px 0 9px;width:27px}
button{display:flex}
input{flex:1;min-width:0;appearance:none;margin:0 1px;height:20px;background:linear-gradient(#dce8fa,#dce8fa) no-repeat 50% 6px/1px 8px,linear-gradient(#5f7fb2,#5f7fb2) no-repeat 0 9px/100% 1px,linear-gradient(#dce8fa,#dce8fa) no-repeat 0 10px/100% 1px}
input::-webkit-slider-thumb{appearance:none;width:11px;height:17px;background:linear-gradient(#4b6796,#4b6796) no-repeat center/1px 9px,#e4ecf8;border:1px solid #4b6796;clip-path:polygon(0 0,100% 0,100% 68%,50% 100%,0 68%)}`,
`<div class="c page">Strona: 4 z 8</div><div class="c words">Wyrazy: 368</div><div class="c"><ui-icon name="spell"></ui-icon></div>
<div class="right"><div class="views"><button class="on" aria-label="Układ wydruku"><ui-icon name="v1"></ui-icon></button><button aria-label="Czytanie"><ui-icon name="v2"></ui-icon></button><button aria-label="Układ sieci Web"><ui-icon name="v3"></ui-icon></button><button aria-label="Konspekt"><ui-icon name="v4"></ui-icon></button><button aria-label="Wersja robocza"><ui-icon name="v5"></ui-icon></button></div><span class="z">90%</span><button aria-label="Pomniejsz"><ui-icon name="zminus"></ui-icon></button><input type="range" min="0" max="100" value="44" aria-label="Powiększenie"><button aria-label="Powiększ"><ui-icon name="zplus"></ui-icon></button></div>`);

define('task-bar', `
:host{display:flex;height:50px;background:#0a0a0a;color:#fff}
button{display:flex;align-items:center;justify-content:center;height:50px;border-bottom:3px solid transparent;padding-top:3px}
.s{width:60px}.a{width:62px}
.run{border-bottom-color:#76b9ed}
.edge{border-bottom:0;padding:0;background:linear-gradient(90deg,#76b9ed 40px,#4a83b5 40px) no-repeat 0 47px/52px 3px;width:52px;margin:0 4px 0 8px}
.vs{width:51px;margin:0 6px 0 5px}.word{width:61px;background:#3b3b3b}
.tray{margin-left:auto;display:flex;align-items:center}
.tray ui-icon{width:30px;justify-content:center}.tray .p{margin-right:15px}
.clock{width:88px;text-align:center;font-size:14px;line-height:23px}
.n{margin-left:10px}.peek{width:6px;height:50px;border-left:1px solid #777;margin-left:20px}`,
`<button class="s" aria-label="Start"><ui-icon name="win"></ui-icon></button><button class="s" aria-label="Szukaj"><ui-icon name="search"></ui-icon></button><button class="s" aria-label="Widok zadań"><ui-icon name="tasks"></ui-icon></button>
<button class="edge" aria-label="Edge"><ui-icon name="edge"></ui-icon></button><button class="a" aria-label="Eksplorator"><ui-icon name="folder"></ui-icon></button><button class="a" aria-label="Sklep"><ui-icon name="store"></ui-icon></button><button class="a" aria-label="Program"><ui-icon name="dred"></ui-icon></button><button class="a" aria-label="Poczta"><ui-icon name="mail"></ui-icon></button><button class="vs run" aria-label="Visual Studio"><ui-icon name="vs"></ui-icon></button><button class="word run" aria-label="Word"><ui-icon name="word"></ui-icon></button>
<div class="tray"><ui-icon class="p" name="people"></ui-icon><ui-icon name="chev"></ui-icon><ui-icon name="battery"></ui-icon><ui-icon name="cloud"></ui-icon><ui-icon name="wifi"></ui-icon><ui-icon name="vol"></ui-icon><div class="clock">10:14<br>20.02.2019</div><ui-icon class="n" name="notif"></ui-icon><div class="peek"></div></div>`);

define('word-app', `:host{display:flex;flex-direction:column;height:100vh;background:#bfdbff}`,
`<title-bar></title-bar><ribbon-tabs></ribbon-tabs><word-ribbon></word-ribbon><word-workspace></word-workspace><status-bar></status-bar><task-bar></task-bar>`);
</script>
</body>
</html>
